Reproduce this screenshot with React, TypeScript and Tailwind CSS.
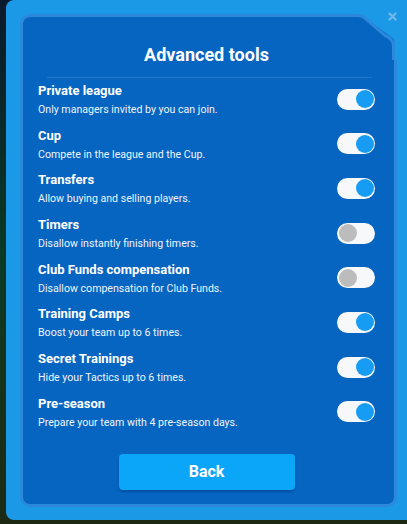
const tools = [
  { title: 'Private league', desc: 'Only managers invited by you can join.', on: true },
  { title: 'Cup', desc: 'Compete in the league and the Cup.', on: true },
  { title: 'Transfers', desc: 'Allow buying and selling players.', on: true },
  { title: 'Timers', desc: 'Disallow instantly finishing timers.', on: false },
  { title: 'Club Funds compensation', desc: 'Disallow compensation for Club Funds.', on: false },
  { title: 'Training Camps', desc: 'Boost your team up to 6 times.', on: true },
  { title: 'Secret Trainings', desc: 'Hide your Tactics up to 6 times.', on: true },
  { title: 'Pre-season', desc: 'Prepare your team with 4 pre-season days.', on: true },
];

const Toggle = ({ on }: { on: boolean }) => {
  return (
    <div
      className={`flex h-[21px] w-[38px] items-center rounded-full bg-[#f7f8fa] px-[1.5px] ${
        on ? 'justify-end' : 'justify-start'
      }`}
    >
      <div
        className={`h-[18px] w-[18px] rounded-full ${on ? 'bg-[#169cf2]' : 'bg-[#bcbcbc]'}`}
      />
    </div>
  );
};

const App = () => {
  return (
    <div className="h-[524px] w-[407px] overflow-hidden bg-gradient-to-b from-[#0a1a2c] via-[#0b3a24] to-[#1c2a14] pl-[6px] font-['Roboto',sans-serif]">
      <div className="relative h-[520px] rounded-l-[8px] bg-[#1b99e7] pb-[13px] pl-[14px] pr-[10px] pt-[14px]">
        <div className="relative flex h-full flex-col rounded-[10px] border-[3px] border-[#2b88db] bg-[#0665c1] pl-[15px] pr-[19px] pt-[27px]">
          {/* chamfered corner */}
          <svg className="absolute -right-[3px] -top-[3px]" width="42" height="46" viewBox="0 0 42 46">
            <path d="M5 0 L42 0 L42 46 L40 46 L40 30 Q40 25 36 23 Z" fill="#1b99e7" />
            <path d="M3 1.5 Q7 1.5 9 3.5 L30 21.5 Q38.5 25 38.5 32 L38.5 46" stroke="#2b88db" strokeWidth="3" fill="none" />
          </svg>

          <h1 className="text-center text-[18px] font-bold leading-[22px] text-white">Advanced tools</h1>
          <div className="ml-[9px] mr-[3px] mt-[11px] h-px bg-[#1f76cc]" />

          <div className="mt-[5px] flex flex-col">
            {tools.map((t) => (
              <div key={t.title} className="flex h-[44.7px] items-start justify-between">
                <div className="flex flex-col">
                  <div className="text-[13px] font-bold leading-[16px] text-white">{t.title}</div>
                  <div className="mt-[4px] text-[10.6px] leading-[14px] text-[#eef4fb]">{t.desc}</div>
                </div>
                <div className="mt-[5.5px]">
                  <Toggle on={t.on} />
                </div>
              </div>
            ))}
          </div>

          <div className="mt-[13px] flex justify-center">
            <button className="h-[36px] w-[176px] rounded-[4px] bg-[#0ca6f8] text-[16px] font-bold text-white shadow-[0_2px_2px_rgba(0,40,100,0.35)]">
              Back
            </button>
          </div>
        </div>

        {/* close */}
        <svg className="absolute left-[382px] top-[12px] z-10" width="9" height="9" viewBox="0 0 9 9">
          <path d="M1.5 1.5 L7.5 7.5 M7.5 1.5 L1.5 7.5" stroke="#74b8e6" strokeWidth="2.2" strokeLinecap="round" />
        </svg>
      </div>
    </div>
  );
};

export default App;
